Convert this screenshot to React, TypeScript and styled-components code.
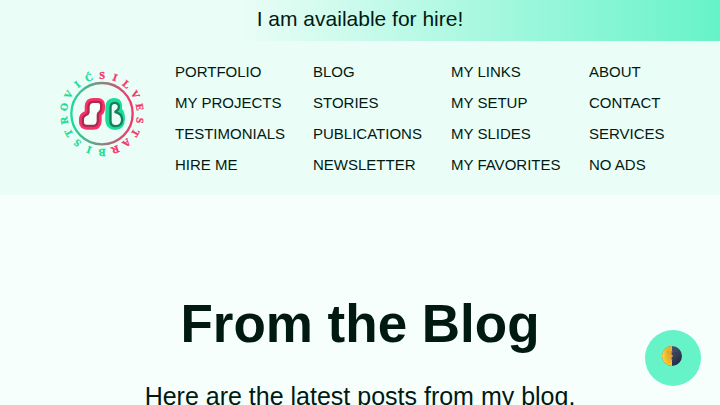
import React from "react";
import styled, { createGlobalStyle } from "styled-components";

const ink = "#001a12";
const mint = "#66f3c8";

const GlobalStyle = createGlobalStyle`
  *, *::before, *::after { box-sizing: border-box; }
  html, body { margin: 0; }
  body {
    background: #f6fffc;
    color: ${ink};
    font-family: "Liberation Sans", Arial, Helvetica, sans-serif;
    scrollbar-width: none;
  }
`;

const Banner = styled.a`
  display: block;
  padding: 6px 16px 9px;
  background: linear-gradient(90deg, #ebfdf7 33%, ${mint});
  color: inherit;
  font-size: 21px;
  line-height: 26px;
  text-align: center;
  text-decoration: none;
`;

const Header = styled.header`
  display: flex;
  align-items: flex-start;
  justify-content: center;
  gap: 24px;
  padding: 22px 16px 21px;
  background: #ebfdf7;
`;

const LogoLink = styled.a`
  display: block;
  flex: none;
  line-height: 0;
`;

const Columns = styled.nav`
  display: grid;
  grid-template-columns: repeat(3, minmax(114px, auto)) minmax(78px, auto);
  column-gap: 24px;
`;

const LinkList = styled.ul`
  display: flex;
  flex-direction: column;
  gap: 13px;
  margin: 0;
  padding: 0;
  list-style: none;
`;

const NavLink = styled.a`
  display: block;
  color: inherit;
  font-size: 15px;
  line-height: 18px;
  text-decoration: none;
  text-transform: uppercase;
  white-space: nowrap;
`;

const Main = styled.main`
  padding: 97px 16px;
  text-align: center;
`;

const Title = styled.h1`
  margin: 0 0 24px;
  font-size: 53px;
  line-height: 64px;
`;

const Intro = styled.p`
  margin: 0;
  font-size: 25px;
  line-height: 32px;
`;

const ThemeButton = styled.button`
  position: fixed;
  right: 19px;
  bottom: 19px;
  display: flex;
  align-items: center;
  justify-content: center;
  width: 56px;
  height: 56px;
  padding: 0 3px 4px 0;
  border: 0;
  border-radius: 50%;
  background: ${mint};
  cursor: pointer;
`;

const LogoLetter = styled.text`
  font-family: "Liberation Serif", "Times New Roman", serif;
  font-size: 31px;
  font-weight: 700;
  text-anchor: middle;
  stroke: currentColor;
  stroke-width: 1px;
`;

const pink = "#f5336b";
const green = "#1bdc98";

const menu = [
  ["Portfolio", "My projects", "Testimonials", "Hire me"],
  ["Blog", "Stories", "Publications", "Newsletter"],
  ["My links", "My setup", "My slides", "My favorites"],
  ["About", "Contact", "Services", "No ads"],
];

const ringLetters = [..."SILVESTARBISTROVIĆ"];

const leftHole =
  "M130 128H144Q150 128 150 134V143Q150 150 146 153Q140 157 140 164V182Q139 193 130 193H110Q102 193 102 186V177Q102 171 108 168Q117 165 119 157V139Q120 128 130 128Z";
const rightSilhouette =
  "M192 113Q214 113 216 134V145Q225 156 225 175Q224 208 196 209Q167 208 166 180V140Q167 114 192 113Z";
const rightHole =
  "M193 131Q203 131 203 139Q203 147 193 151V158Q213 162 213 178Q212 194 197 194Q185 194 185 182V142Q185 131 193 131Z";

function Logo() {
  return (
    <svg width="98" height="101" viewBox="9 8 294 303" aria-hidden="true">
      <defs>
        <linearGradient id="ring" x1="0" y1="0" x2="1" y2="0">
          <stop offset="0" stopColor={green} />
          <stop offset="1" stopColor={pink} />
        </linearGradient>
      </defs>
      <circle cx="156" cy="160" r="92" fill="none" stroke="url(#ring)" strokeWidth="7" />
      {ringLetters.map((letter, i) => (
        <LogoLetter
          key={i}
          x="156"
          y="55"
          color={i < 9 ? pink : green}
          fill="currentColor"
          transform={`rotate(${i * 20} 156 160)`}
        >
          {letter}
        </LogoLetter>
      ))}
      <g strokeLinejoin="round">
        <path d={leftHole} fill="none" stroke={pink} strokeWidth="30" />
        <path d={leftHole} fill="none" stroke="#b02850" strokeWidth="14" />
        <path d={leftHole} fill="#f5fffc" />
        <path d={rightSilhouette} fill={green} />
        <path d={rightHole} fill="none" stroke="#11815b" strokeWidth="14" />
        <path d={rightHole} fill="#ebfdf7" />
      </g>
    </svg>
  );
}

function Moon() {
  return (
    <svg width="20" height="20" viewBox="0 0 20 20" aria-hidden="true">
      <defs>
        <radialGradient id="lit" cx="0.8" cy="0.4" r="0.8">
          <stop offset="0" stopColor="#dda43a" />
          <stop offset="0.55" stopColor="#f3b92b" />
          <stop offset="1" stopColor="#ffdf45" />
        </radialGradient>
        <linearGradient id="shade" x1="0" y1="0" x2="1" y2="1">
          <stop offset="0.3" stopColor="#4b5266" />
          <stop offset="1" stopColor="#152340" />
        </linearGradient>
      </defs>
      <circle cx="10" cy="10" r="10" fill="url(#shade)" />
      <path d="M10 0A10 10 0 0 0 10 20Z" fill="url(#lit)" />
      <path d="M10 5l-1 3 2 2-2 2 1 2" fill="none" stroke="#a98040" strokeWidth="1" />
      <circle cx="6" cy="6" r="1" fill="#dfa02f" />
      <circle cx="14" cy="7" r="1" fill="#303b56" />
    </svg>
  );
}

export default function App() {
  return (
    <>
      <GlobalStyle />
      <Banner href="#hire">I am available for hire!</Banner>
      <Header>
        <LogoLink href="#home" aria-label="Silvestar Bistrović">
          <Logo />
        </LogoLink>
        <Columns aria-label="Main">
          {menu.map((links) => (
            <LinkList key={links[0]}>
              {links.map((label) => (
                <li key={label}>
                  <NavLink href={`#${label.toLowerCase().replace(" ", "-")}`}>{label}</NavLink>
                </li>
              ))}
            </LinkList>
          ))}
        </Columns>
      </Header>
      <Main>
        <Title>From the Blog</Title>
        <Intro>Here are the latest posts from my blog.</Intro>
      </Main>
      <ThemeButton type="button" aria-label="Toggle theme">
        <Moon />
      </ThemeButton>
    </>
  );
}
